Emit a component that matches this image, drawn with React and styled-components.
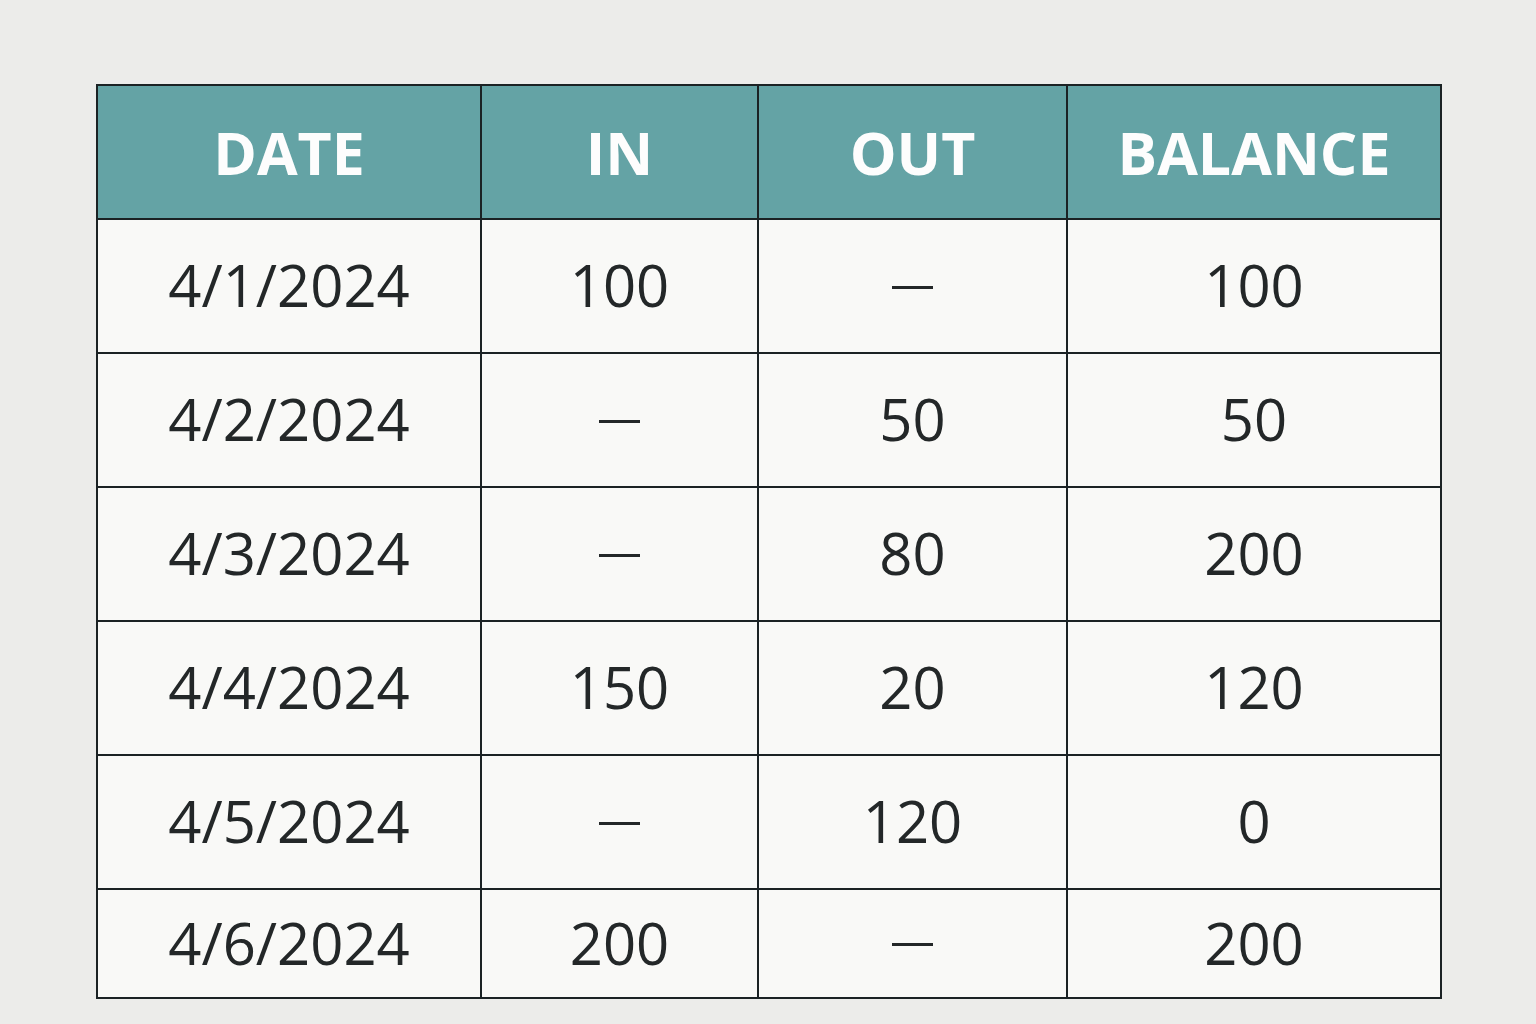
import React from "react";
import styled, { createGlobalStyle } from "styled-components";

const rows = [
  { date: "4/1/2024", in: "100", out: "—", balance: "100" },
  { date: "4/2/2024", in: "—", out: "50", balance: "50" },
  { date: "4/3/2024", in: "—", out: "80", balance: "200" },
  { date: "4/4/2024", in: "150", out: "20", balance: "120" },
  { date: "4/5/2024", in: "—", out: "120", balance: "0" },
  { date: "4/6/2024", in: "200", out: "—", balance: "200" },
];

const columns = [
  { key: "date", label: "DATE" },
  { key: "in", label: "IN" },
  { key: "out", label: "OUT" },
  { key: "balance", label: "BALANCE" },
];

const GlobalStyle = createGlobalStyle`
  html, body {
    margin: 0;
    padding: 0;
    background: #ececea;
  }
  body {
    font-family: "Open Sans", "Noto Sans", sans-serif;
  }
`;

const Page = styled.div`
  min-height: 1024px;
  display: flex;
  justify-content: center;
  align-items: flex-start;
  padding: 84px 0 0 2px;
  box-sizing: border-box;
`;

// grid lines come from the dark background showing through the gaps
const Ledger = styled.div`
  display: grid;
  grid-template-columns: 382px 275px 307px 372px;
  grid-template-rows: repeat(6, 132px) 107px;
  gap: 2px;
  padding: 2px;
  background: #1b2224;
`;

const HeadCell = styled.div`
  display: flex;
  align-items: center;
  justify-content: center;
  background: #64a3a5;
  color: #fdfdfd;
  font-size: 59px;
  font-weight: 700;
  line-height: 1;
`;

const Cell = styled.div`
  display: flex;
  align-items: center;
  justify-content: center;
  padding-bottom: 2px;
  background: #f9f9f7;
  color: #232728;
  font-size: 58px;
  line-height: 1;
`;

const Dash = styled.span`
  display: inline-block;
  width: 41px;
  height: 3px;
  margin-top: 4px;
  background: #232728;
`;

const App = () => {
  return (
    <Page>
      <GlobalStyle />
      <Ledger>
        {columns.map((c) => (
          <HeadCell key={c.label}>{c.label}</HeadCell>
        ))}
        {rows.map((row) =>
          columns.map((c) => (
            <Cell key={row.date + c.key}>
              {row[c.key] === "—" ? <Dash aria-label="—" /> : row[c.key]}
            </Cell>
          ))
        )}
      </Ledger>
    </Page>
  );
};

export default App;
